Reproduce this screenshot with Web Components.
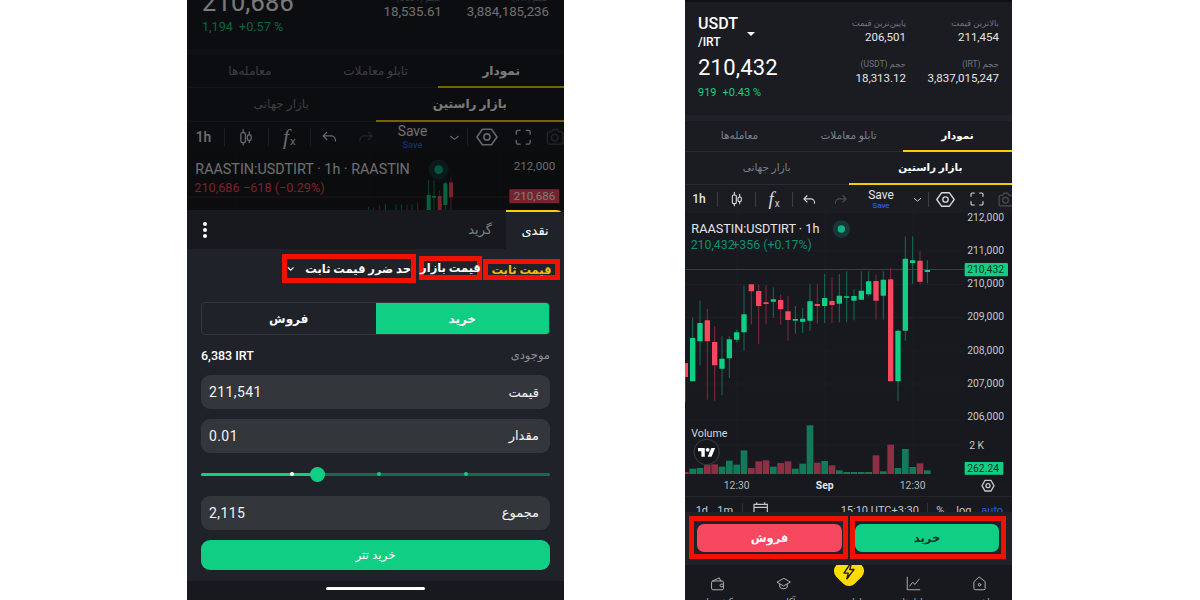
<!DOCTYPE html>
<html lang="fa">
<head>
<meta charset="UTF-8">
<title>Raastin trade</title>
<style>
  html, body { margin: 0; height: 600px; overflow: hidden; background: #fff; }
  body { font-family: Roboto, "DejaVu Sans", sans-serif; }
  #page { display: flex; gap: 121px; padding-left: 187px; height: 600px; }
</style>
</head>
<body>
<div id="page">

  <phone-screen style="--s:1.153; width:377px">
    <dim-layer>
      <trade-stats base="USDT" price="210,686" change="1,194" pct="+0.57 %"
        high="" low="" volq="3,884,185,236" volb="18,535.61" tight></trade-stats>
      <tab-row items="نمودار|تابلو معاملات|معامله‌ها" style="--h:33px"></tab-row>
      <tab-row items="بازار راستین|بازار جهانی" style="--h:34px"></tab-row>
      <chart-toolbar style="--h:30px"></chart-toolbar>
      <mini-chart></mini-chart>
    </dim-layer>
    <order-sheet></order-sheet>
  </phone-screen>

  <phone-screen style="--s:1; width:327px">
    <trade-stats base="USDT" price="210,432" change="919" pct="+0.43 %"
      high="211,454" low="206,501" volq="3,837,015,247" volb="18,313.12"></trade-stats>
    <tab-row items="نمودار|تابلو معاملات|معامله‌ها" style="--h:31px"></tab-row>
    <tab-row items="بازار راستین|بازار جهانی" style="--h:33px"></tab-row>
    <chart-toolbar style="--h:28px"></chart-toolbar>
    <candle-chart></candle-chart>
    <action-bar></action-bar>
    <bottom-nav></bottom-nav>
  </phone-screen>

</div>

<script>
  const GREEN = '#10cf85'
  const RED = '#f8485f'

  class PhoneScreen extends HTMLElement {
    constructor() {
      super()
      this.attachShadow({ mode: 'open' })
    }
    connectedCallback() {
      this.shadowRoot.innerHTML = `
        <style>
          :host { display: flex; flex-direction: column; height: 600px; overflow: hidden;
                  background: #17191e; color: #fff; position: relative; }
        </style>
        <slot></slot>`
    }
  }

  // top part of the left phone, darkened behind the sheet
  class DimLayer extends HTMLElement {
    constructor() {
      super()
      this.attachShadow({ mode: 'open' })
    }
    connectedCallback() {
      this.shadowRoot.innerHTML = `
        <style>
          :host { display: flex; flex-direction: column; justify-content: flex-end; height: 210px;
                  overflow: hidden; position: relative; flex: none; }
          :host::after { content: ''; position: absolute; inset: 0; background: rgba(0,0,0,.52); }
        </style>
        <slot></slot>`
    }
  }

  class TradeStats extends HTMLElement {
    constructor() {
      super()
      this.attachShadow({ mode: 'open' })
    }
    connectedCallback() {
      const a = n => this.getAttribute(n) || ''
      this.shadowRoot.innerHTML = `
        <style>
          :host { display: block; flex: none; background: #1a1c22; border-top: 2px solid #0f1114;
                  border-bottom: 6px solid #1f2329; box-sizing: content-box; }
          .wrap { display: flex; justify-content: space-between; padding: 12px calc(13px * var(--s)) 15px; }
          .base { font-size: calc(16px * var(--s)); line-height: 20px; font-weight: 500; display: flex; }
          .caret { width: 0; height: 0; border: 4px solid transparent; border-top: 4px solid #fff;
                   border-bottom: 0; margin: 18px 0 0 9px; }
          .quote { font-size: 12px; line-height: 14px; font-weight: 500; margin-top: -1px; }
          .price { font-size: calc(22px * var(--s)); line-height: 28px; margin-top: 5px; letter-spacing: .2px; }
          .chg { font-size: calc(11px * var(--s)); line-height: 14px; margin-top: 4px; color: ${GREEN}; }
          .chg span { margin-left: 6px; }
          .stats { display: grid; grid-template-columns: repeat(2, calc(93px * var(--s)));
                   text-align: right; margin-top: 2px; align-content: start; row-gap: 13px; }
          .lb { font-size: 8.5px; line-height: 14px; color: #6f747c; direction: rtl; }
          .val { font-size: calc(11.5px * var(--s)); line-height: 14px; color: #e4e5e7; }
          :host([tight]) { border-top: 0; }
        </style>
        <div class="wrap">
          <div>
            <div class="base">${a('base')}<i class="caret"></i></div>
            <div class="quote">/IRT</div>
            <div class="price">${a('price')}</div>
            <div class="chg">${a('change')}<span>${a('pct')}</span></div>
          </div>
          <div class="stats">
            <div><div class="lb">پایین‌ترین قیمت</div><div class="val">${a('low') || '&nbsp;'}</div></div>
            <div><div class="lb">بالاترین قیمت</div><div class="val">${a('high') || '&nbsp;'}</div></div>
            <div><div class="lb">حجم (USDT)</div><div class="val">${a('volb')}</div></div>
            <div><div class="lb">حجم (IRT)</div><div class="val">${a('volq')}</div></div>
          </div>
        </div>`
    }
  }

  class TabRow extends HTMLElement {
    constructor() {
      super()
      this.attachShadow({ mode: 'open' })
    }
    connectedCallback() {
      const items = this.getAttribute('items').split('|')
      this.shadowRoot.innerHTML = `
        <style>
          :host { display: grid; grid-auto-flow: column; grid-auto-columns: 1fr; direction: rtl; flex: none;
                  height: var(--h); background: #1a1c22; box-shadow: inset 0 -1px 0 #2a2d33; }
          div { display: flex; align-items: center; justify-content: center; padding-bottom: 2px;
                font-size: calc(10.5px * var(--s)); color: #7c8087; box-sizing: border-box; }
          div.on { color: #fff; font-weight: 700; border-bottom: 2px solid #f5d000; padding-bottom: 0; }
        </style>
        ${items.map((t, i) => `<div class="${i == 0 ? 'on' : ''}">${t}</div>`).join('')}`
    }
  }

  class ChartToolbar extends HTMLElement {
    constructor() {
      super()
      this.attachShadow({ mode: 'open' })
    }
    connectedCallback() {
      const w = n => `calc(${n}px * var(--s))`
      const icon = (n, body, size = 16, style = '') =>
        `<span class="c" style="width:${w(n)}"><svg width="${size}" height="${size}" viewBox="0 0 24 24" fill="none" stroke="#d6d8db" stroke-width="1.7" stroke-linecap="round" stroke-linejoin="round" style="width:${w(size)};height:${w(size)};${style}">${body}</svg></span>`
      this.shadowRoot.innerHTML = `
        <style>
          :host { display: flex; flex: none; height: var(--h); background: #1a1c22; overflow: hidden; align-items: center; }
          .c { display: flex; flex: none; align-items: center; justify-content: center; height: 100%; }
          .sep { flex: none; width: 1px; height: calc(15px * var(--s)); background: #3a3d43; }
          .t { font-size: calc(12px * var(--s)); font-weight: 500; color: #e4e5e7; padding-right: 4px; box-sizing: border-box; }
          .fx { font: italic calc(19px * var(--s)) "Liberation Serif", serif; color: #d6d8db; }
          .fx b { font: calc(10px * var(--s)) Roboto, sans-serif; margin-left: 1px; position: relative; top: 4px; }
          .save { flex-direction: column; line-height: 1; color: #e4e5e7; font-size: calc(12px * var(--s)); }
          .save small { font-size: calc(8px * var(--s)); font-weight: 500; color: #2b5ce6; margin-top: 1px; }
        </style>
        <span class="c t" style="width:${w(32)}">1h</span>
        <i class="sep"></i>
        ${icon(37, '<path d="M8 2v4M8 19v3M16 5v4M16 16v3"/><rect x="5" y="6" width="6" height="13" rx="2"/><rect x="13.5" y="9" width="5" height="7" rx="2"/>')}
        <i class="sep"></i>
        <span class="c fx" style="width:${w(36)}">f<b>x</b></span>
        <i class="sep"></i>
        ${icon(32, '<path d="M8 6 3 11l5 5M3 11h11a6 6 0 0 1 6 6v1"/>', 15)}
        ${icon(30, '<path d="M16 6l5 5-5 5M21 11H10a6 6 0 0 0-6 6v1" stroke="#4a4d53"/>', 15)}
        <span class="c save" style="width:${w(52)}">Save<small>Save</small></span>
        ${icon(21, '<path d="M6 10l6 5 6-5"/>', 13)}
        <i class="sep"></i>
        ${icon(33, '<path d="M7 3.5h10L23 12l-6 8.5H7L1 12z"/><circle cx="12" cy="12" r="3.4"/>', 19)}
        ${icon(30, '<path d="M3 8V5a2 2 0 0 1 2-2h3M16 3h3a2 2 0 0 1 2 2v3M21 16v3a2 2 0 0 1-2 2h-3M8 21H5a2 2 0 0 1-2-2v-3"/>', 16)}
        ${icon(26, '<path stroke="#4a4d53" d="M3 8a2 2 0 0 1 2-2h3l2-3h5l2 3h3a2 2 0 0 1 2 2v11a2 2 0 0 1-2 2H5a2 2 0 0 1-2-2z"/><circle stroke="#4a4d53" cx="12" cy="13" r="4"/>', 17)}`
    }
  }

  // x, wick top, wick bottom, body top, body bottom, up
  const CANDLES = [
    [4,465,582,465,507,0],[26,328,520,390,520,1],[48,278,472,345,400,1],[70,303,575,337,400,0],
    [92,355,578,402,472,0],[114,385,562,452,482,1],[136,385,510,394,451,1],[158,365,403,373,395,1],
    [180,233,428,319,373,1],[202,229,349,229,250,0],[224,229,408,249,294,0],[246,232,349,283,288,0],
    [268,238,329,274,281,1],[290,260,350,276,304,0],[312,264,398,310,336,0],[334,294,377,333,338,1],
    [356,300,375,332,341,1],[378,229,368,280,338,1],[400,229,347,288,294,0],[422,198,345,270,294,1],
    [444,207,345,279,291,0],[466,198,343,263,287,1],[488,190,343,265,269,1],[510,243,337,264,278,1],
    [532,190,275,248,275,1],[554,190,265,220,259,1],[576,200,335,219,278,0],[598,190,335,215,263,1],
    [620,180,520,214,520,0],[642,365,578,368,520,1],[664,85,398,152,368,1],[686,85,228,157,165,1],
    [708,130,228,158,221,0],[730,157,226,186,192,1]
  ]
  // x, bar top, up. all bars end at y=798
  const VOLUME = [
    [4,177,0],[26,167,1],[48,165,1],[70,156,0],[92,154,0],[114,161,1],[136,143,1],[158,155,1],[180,112,1],
    [202,165,0],[224,145,0],[246,142,0],[268,161,1],[290,150,0],[312,145,0],[334,167,1],[356,152,1],[378,37,1],
    [400,149,0],[422,144,1],[444,157,0],[466,172,1],[488,177,1],[510,177,1],[532,177,1],[554,177,1],[576,127,0],
    [598,175,1],[620,95,0],[642,165,1],[664,108,1],[686,162,1],[708,151,0],[730,172,1]
  ]

  const candleSvg = list => list.map(([x, wt, wb, bt, bb, up]) => `
    <rect x="${x - 1.5}" y="${wt}" width="3" height="${wb - wt}" fill="${up ? '#0f6f57' : '#84293b'}"/>
    <rect x="${x - 8}" y="${bt}" width="16" height="${bb - bt}" rx="1" fill="${up ? GREEN : RED}"/>`).join('')

  const SVG_TEXT = 'font-family="Roboto, sans-serif" dominant-baseline="central"'

  class CandleChart extends HTMLElement {
    constructor() {
      super()
      this.attachShadow({ mode: 'open' })
    }
    connectedCallback() {
      const hs = [128, 228, 328, 428, 527, 635, 710]
      const prices = [[28,'212,000'],[128,'211,000'],[227,'210,000'],[326,'209,000'],[426,'208,000'],[526,'207,000'],[625,'206,000']]
      this.shadowRoot.innerHTML = `
        <style>
          :host { display: block; flex: none; height: 299px; background: #17191e; }
          svg { display: block; }
        </style>
        <svg width="327" height="299" viewBox="3 15 981 897">
          ${hs.map(y => `<rect x="0" y="${y}" width="840" height="2" fill="#212329"/>`).join('')}
          ${[158, 422, 686].map(x => `<rect x="${x}" y="15" width="2" height="790" fill="#212329"/>`).join('')}
          <rect x="0" y="184" width="842" height="2" fill="#0f6f57"/>
          ${VOLUME.map(([x, t, up]) => `<rect x="${x - 10}" y="${t + 615}" width="20" height="${183 - t}" fill="${up ? '#127a58' : '#8e3045'}"/>`).join('')}
          ${candleSvg(CANDLES)}
          <g ${SVG_TEXT} font-size="38" fill="#e4e5e7"><text x="22" y="62">RAASTIN:USDTIRT · 1h</text></g>
          <circle cx="472" cy="63" r="26" fill="#12b08a" opacity=".2"/><circle cx="472" cy="63" r="11" fill="#12b08a"/>
          <g ${SVG_TEXT} font-size="37" fill="#0e8f72"><text x="20" y="112">210,432</text><text x="145" y="112">+356 (+0.17%)</text></g>
          <g ${SVG_TEXT} font-size="31" fill="#c6c8cc" text-anchor="end">
            ${prices.map(([y, t]) => `<text x="960" y="${y}">${t}</text>`).join('')}
            <text x="900" y="713">2 K</text>
          </g>
          <rect x="842" y="165" width="130" height="40" rx="3" fill="${GREEN}"/>
          <text ${SVG_TEXT} x="960" y="184" font-size="31" text-anchor="end" fill="#0d2f24">210,432</text>
          <rect x="842" y="762" width="116" height="38" rx="2" fill="${GREEN}"/>
          <text ${SVG_TEXT} x="945" y="781" font-size="31" text-anchor="end" fill="#0d2f24">262.24</text>
          <text ${SVG_TEXT} x="22" y="675" font-size="32" fill="#d6d8db">Volume</text>
          <circle cx="68" cy="732" r="38" fill="#141619" stroke="#3c3f45" stroke-width="3"/>
          <g transform="translate(42 714) scale(1.45)" fill="#fff">
            <path d="M14 22H7V11H0V4h14v18zM28 22h-8l7.5-18h8L28 22z"/><circle cx="20" cy="8" r="4"/>
          </g>
          <g ${SVG_TEXT} font-size="31" text-anchor="middle" fill="#b6b8bc">
            <text x="158" y="833">12:30</text><text x="422" y="833" font-weight="700" fill="#e4e5e7">Sep</text><text x="686" y="833">12:30</text>
          </g>
          <g transform="translate(912 833)" fill="none" stroke="#c6c8cc" stroke-width="4">
            <path d="M-9-16H9L18 0 9 16H-9L-18 0z"/><circle r="6"/>
          </g>
          <rect x="0" y="865" width="984" height="2" fill="#2a2d33"/>
          <g font-family="Roboto, sans-serif" font-size="33" fill="#c6c8cc">
            <text x="35" y="918">1d</text><text x="100" y="918">1m</text>
            <text x="470" y="918">15:10 UTC+3:30</text>
            <text x="757" y="918">%</text><text x="817" y="918">log</text>
            <text x="892" y="918" fill="#2b5ce6">auto</text>
          </g>
          <rect x="174" y="885" width="2" height="30" fill="#3a3d43"/><rect x="730" y="885" width="2" height="30" fill="#3a3d43"/>
          <path d="M210 915v-26h40v26M210 898h40M218 883v8M242 883v8" fill="none" stroke="#c6c8cc" stroke-width="3.5"/>
        </svg>`
    }
  }

  // the bit of chart that shows above the sheet on the left phone
  class MiniChart extends HTMLElement {
    constructor() {
      super()
      this.attachShadow({ mode: 'open' })
    }
    connectedCallback() {
      const small = [[545,245,265,250,265,1],[560,248,265,252,265,0],[578,242,265,250,265,1],[595,236,265,245,265,1],
        [627,238,265,245,265,1],[643,238,265,245,265,1],[660,240,265,248,265,1],[675,238,265,250,265,0],[692,232,265,245,265,0]]
      const big = [[725,165,255,210,255,1],[741,165,255,213,218,1],[758,195,255,213,255,0],[775,170,255,175,240,1],[792,157,255,172,217,0]]
      this.shadowRoot.innerHTML = `
        <style>
          :host { display: block; flex: none; height: 58px; background: #17191e; }
          svg { display: block; }
        </style>
        <svg width="377" height="58" viewBox="0 81 1131 174">
          ${[148, 545, 940].map(x => `<rect x="${x}" y="81" width="2" height="174" fill="#24262c"/>`).join('')}
          <rect x="0" y="215" width="967" height="2" fill="#84293b"/>
          ${small.map(([x, a, b]) => `<rect x="${x - 1.5}" y="${a}" width="3" height="${b - a}" fill="${x % 2 ? '#0f8f67' : '#a33a4c'}"/>`).join('')}
          ${big.map(([x, wt, wb, bt, bb, up]) => `<rect x="${x - 1.5}" y="${wt}" width="3" height="${wb - wt}" fill="${up ? '#0f8f67' : '#a33a4c'}"/><rect x="${x - 6}" y="${bt}" width="12" height="${bb - bt}" fill="${up ? GREEN : RED}"/>`).join('')}
          <text ${SVG_TEXT} x="25" y="132" font-size="43" fill="#e4e5e7">RAASTIN:USDTIRT · 1h · RAASTIN</text>
          <circle cx="755" cy="134" r="30" fill="#12b08a" opacity=".2"/><circle cx="755" cy="134" r="13" fill="#12b08a"/>
          <text ${SVG_TEXT} x="22" y="187" font-size="38" fill="${RED}">210,686</text>
          <text ${SVG_TEXT} x="168" y="187" font-size="38" fill="${RED}">−618 (−0.29%)</text>
          <text ${SVG_TEXT} x="1105" y="124" font-size="35" text-anchor="end" fill="#d6d8db">212,000</text>
          <rect x="967" y="193" width="150" height="42" rx="3" fill="${RED}"/>
          <text ${SVG_TEXT} x="1105" y="214" font-size="35" text-anchor="end" fill="#fff">210,686</text>
        </svg>`
    }
  }

  class OrderField extends HTMLElement {
    constructor() {
      super()
      this.attachShadow({ mode: 'open' })
    }
    connectedCallback() {
      this.shadowRoot.innerHTML = `
        <style>
          :host { display: flex; flex: none; height: 34px; align-items: center; justify-content: space-between;
                  padding: 0 11px 0 8px; background: #33373c; border-radius: 9px;
                  font-size: 14px; color: #f2f3f4; letter-spacing: .4px; }
          span { font-size: 13px; letter-spacing: 0; }
        </style>
        <slot></slot><span>${this.getAttribute('label')}</span>`
    }
  }

  class OrderSheet extends HTMLElement {
    constructor() {
      super()
      this.attachShadow({ mode: 'open' })
    }
    connectedCallback() {
      this.shadowRoot.innerHTML = `
        <style>
          :host { display: flex; flex-direction: column; flex: 1; background: #1f2329; border-radius: 8px 8px 0 0; overflow: hidden; }
          .top { display: flex; height: 39px; flex: none; background: #17191e; align-items: center; justify-content: space-between; }
          .dots { display: flex; flex-direction: column; gap: 2px; margin-left: 16px; }
          .dots i { width: 4px; height: 4px; border-radius: 50%; background: #fff; }
          .tabs { display: flex; height: 100%; align-items: center; font-size: 13px; color: #7c8087; }
          .tabs .grid { margin-right: 14px; }
          .tabs .on { width: 58px; height: 100%; box-sizing: border-box; background: #1f2329; color: #fff; display: flex;
                      align-items: center; justify-content: center; border-top: 2px solid #f5d000; border-top-left-radius: 0; }
          .types { display: flex; justify-content: flex-end; align-items: flex-start; height: 29px; margin-top: 5px; padding-right: 4px; flex: none;
                   font-size: 11.5px; font-weight: 700; white-space: nowrap; }
          .types div { box-sizing: border-box; border: 5px solid #ef1200; display: flex; align-items: center; justify-content: center; }
          .b1 { width: 134px; height: 29px; gap: 11px; margin-right: 3px; }
          .b2 { width: 63px; height: 24px; margin: 2px 1px 0 0; }
          .b3 { width: 77px; height: 21px; margin-top: 5px; color: #f5b90b; }
          .form { display: flex; flex-direction: column; padding: 0 14px; flex: 1; }
          .side { display: flex; height: 33px; margin-top: 19px; flex: none; border: 1px solid #33373c; box-sizing: border-box; border-radius: 4px; overflow: hidden; font-size: 12px; font-weight: 700; }
          .side span { flex: 1; display: flex; align-items: center; justify-content: center; }
          .side .buy { background: ${GREEN}; }
          .bal { display: flex; height: 40px; flex: none; align-items: center; justify-content: space-between; font-size: 12.5px; font-weight: 500; }
          .bal span { color: #8b8f95; font-size: 11.5px; font-weight: 400; }
          order-field + order-field { margin-top: 9.5px; }
          .slider { position: relative; height: 3px; margin: 20px 0 20px; flex: none; background: #17694d; border-radius: 2px; }
          .slider .fill { position: absolute; left: 0; top: 0; bottom: 0; width: 33.5%; background: ${GREEN}; border-radius: 2px; }
          .slider i { position: absolute; top: -0.5px; width: 4px; height: 4px; border-radius: 50%; background: ${GREEN}; margin-left: -2px; }
          .slider .thumb { position: absolute; left: 33.5%; top: -6px; width: 15px; height: 15px; margin-left: -7.5px; border-radius: 50%; background: ${GREEN}; }
          .go { height: 30px; flex: none; margin-top: 10px; border-radius: 9px; background: ${GREEN}; display: flex; align-items: center; justify-content: center; font-size: 12px; font-weight: 500; }
          .home { height: 19px; flex: none; background: #17191e; display: flex; justify-content: center; padding-top: 6px; box-sizing: border-box; }
          .home i { width: 99px; height: 3px; border-radius: 2px; background: #fff; }
        </style>
        <div class="top">
          <div class="dots"><i></i><i></i><i></i></div>
          <div class="tabs"><span class="grid">گرید</span><span class="on">نقدی</span></div>
        </div>
        <div class="types">
          <div class="b1"><svg width="9" height="6" viewBox="0 0 9 6" fill="none" stroke="#fff" stroke-width="1.3"><path d="M1 1l3.500 3.500L8 1"/></svg><span>حد ضرر قیمت ثابت</span></div>
          <div class="b2">قیمت بازار</div>
          <div class="b3">قیمت ثابت</div>
        </div>
        <div class="form">
          <div class="side"><span>فروش</span><span class="buy">خرید</span></div>
          <div class="bal">6,383 IRT<span>موجودی</span></div>
          <order-field label="قیمت">211,541</order-field>
          <order-field label="مقدار">0.01</order-field>
          <div class="slider">
            <div class="fill"></div>
            <i style="left:26%;background:#fff"></i><i style="left:51%"></i><i style="left:76%"></i>
            <div class="thumb"></div>
          </div>
          <order-field label="مجموع">2,115</order-field>
          <div class="go">خرید تتر</div>
        </div>
        <div class="home"><i></i></div>`
    }
  }

  class ActionBar extends HTMLElement {
    constructor() {
      super()
      this.attachShadow({ mode: 'open' })
    }
    connectedCallback() {
      this.shadowRoot.innerHTML = `
        <style>
          :host { display: flex; flex: none; height: 53px; gap: 2px; padding: 4px 0 0 4px; box-sizing: border-box; background: #1f2329; position: relative; z-index: 2; }
          .box { box-sizing: border-box; height: 43px; border: 5px solid #ef1200; display: flex; align-items: center; }
          .box span { height: 28px; border-radius: 7px; flex: none; display: flex; align-items: center; justify-content: center; font-size: 11.5px; font-weight: 700; }
          .sell { width: 159px; padding-left: 3px; }
          .sell span { width: 145px; background: ${RED}; }
          .buy { width: 156px; }
          .buy span { width: 144px; background: ${GREEN}; color: #123529; }
        </style>
        <div class="box sell"><span>فروش</span></div>
        <div class="box buy"><span>خرید</span></div>`
    }
  }

  class BottomNav extends HTMLElement {
    constructor() {
      super()
      this.attachShadow({ mode: 'open' })
    }
    connectedCallback() {
      const items = [
        ['داشبورد', '<path d="M12 2 20.500 8.500a1 1 0 0 1 .5 1V20a2 2 0 0 1-2 2H5a2 2 0 0 1-2-2V9.500a1 1 0 0 1 .5-1z"/><circle cx="12" cy="14" r="2"/>'],
        ['بازارها', '<path d="M2 2v20h20M6 16l4.500-6 4 3.500L21 5"/>'],
        ['معامله سریع', ''],
        ['آکادمی', '<path d="M12 4 1.500 10 12 16l10.500-6zM6 13v5c3 3 9 3 12 0v-5"/>'],
        ['کیف پول', '<path d="M4 8l11-5 2 5M2.500 10a2 2 0 0 1 2-2h15a2 2 0 0 1 2 2v10a2 2 0 0 1-2 2h-15a2 2 0 0 1-2-2zM21 13h-3a2 2 0 0 0 0 4h3"/>']
      ]
      this.shadowRoot.innerHTML = `
        <style>
          :host { display: grid; grid-template-columns: repeat(5, 1fr); direction: rtl; flex: 1; position: relative; background: #17191e; }
          div.it { display: flex; flex-direction: column; align-items: center; font-size: 8.5px; color: #b6b8bc; white-space: nowrap; }
          svg.i { width: 15px; height: 15px; margin-top: 11px; margin-bottom: 5px; fill: none; stroke: #b6b8bc; stroke-width: 1.5; stroke-linejoin: round; stroke-linecap: round; flex: none; }
          .ph { height: 31px; flex: none; }
          .flash { position: absolute; left: 50%; top: -7px; width: 26px; height: 26px; margin-left: -13px; border-radius: 8px; background: #ffdc00; transform: rotate(45deg); display: flex; align-items: center; justify-content: center; }
          .flash svg { transform: rotate(-45deg); }
        </style>
        ${items.map(([t, d]) => `<div class="it">${d ? `<svg class="i" viewBox="0 0 24 24">${d}</svg>` : '<div class="ph"></div>'}<span>${t}</span></div>`).join('')}
        <div class="flash"><svg width="17" height="17" viewBox="0 0 24 24" fill="none" stroke="#1a1c22" stroke-width="2" stroke-linejoin="round"><path d="M13 2 5 14h6l-2 8 10-13h-6l2-7z"/></svg></div>`
    }
  }

  customElements.define('phone-screen', PhoneScreen)
  customElements.define('dim-layer', DimLayer)
  customElements.define('trade-stats', TradeStats)
  customElements.define('tab-row', TabRow)
  customElements.define('chart-toolbar', ChartToolbar)
  customElements.define('candle-chart', CandleChart)
  customElements.define('mini-chart', MiniChart)
  customElements.define('order-field', OrderField)
  customElements.define('order-sheet', OrderSheet)
  customElements.define('action-bar', ActionBar)
  customElements.define('bottom-nav', BottomNav)
</script>
</body>
</html>
